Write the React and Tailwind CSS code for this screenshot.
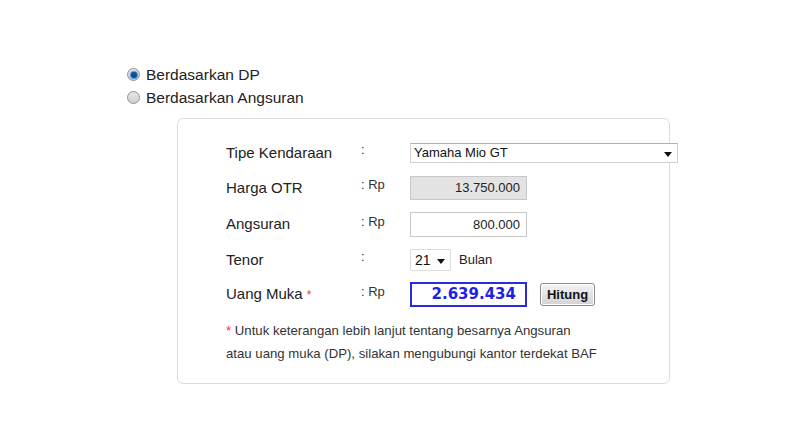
import React from "react"

function Radio({ checked, label }) {
  return (
    <label className="flex h-[23px] items-center">
      <span className="flex h-[13px] w-[13px] shrink-0 items-center justify-center rounded-full border border-[#8f8f8f] bg-gradient-to-b from-[#e8e8e8] to-[#cfcfcf]">
        {checked && <span className="h-[6px] w-[6px] rounded-full bg-[#0b4f9e] shadow-[0_0_1px_1px_#4a90d9]" />}
      </span>
      <span className="ml-[6px] text-[15.5px] text-[#222]">{label}</span>
    </label>
  )
}

function Row({ label, sep, children, className = "", star }) {
  return (
    <div className={"flex items-center " + className}>
      <div className="w-[135px] shrink-0 text-[15px] text-[#222]">
        {label}
        {star && <span className="ml-[4px] text-[12px] text-[#e33]">*</span>}
      </div>
      <div className="w-[49px] shrink-0 -translate-y-[3px] text-[13px] text-[#333]">{sep}</div>
      <div className="flex shrink-0 items-center">{children}</div>
    </div>
  )
}

export default function App() {
  return (
    <div className="h-[445px] w-[800px] overflow-hidden bg-white pt-[63px] font-['Liberation_Sans',Arial,sans-serif]">
      <div className="ml-[127px]">
        <Radio checked label="Berdasarkan DP" />
        <Radio label="Berdasarkan Angsuran" />
      </div>

      <div className="ml-[177px] mt-[9px] h-[266px] w-[493px] rounded-[6px] border border-[#dcdcdc] pl-[48px] pt-[24px]">
        <Row label="Tipe Kendaraan" sep=":" className="h-[20px]">
          <div className="flex h-[20px] w-[268px] items-center justify-between border border-[#d0d0d0] border-t-[#b0b0b0] bg-white pl-[3px] pr-[5px] text-[13px] text-[#111]">
            <span>Yamaha Mio GT</span>
            <span className="mt-[2px] h-0 w-0 border-x-[4px] border-t-[5px] border-x-transparent border-t-[#111]" />
          </div>
        </Row>

        <Row label="Harga OTR" sep=": Rp" className="mt-[13px] h-[24px]">
          <div className="flex h-[24px] w-[117px] items-center justify-end border border-[#c8c8c8] bg-[#e3e3e3] pr-[6px] text-[13px] text-[#222]">
            13.750.000
          </div>
        </Row>

        <Row label="Angsuran" sep=": Rp" className="mt-[12px] h-[25px]">
          <div className="flex h-[25px] w-[117px] items-center justify-end border border-[#c8c8c8] bg-white pr-[6px] text-[13px] text-[#222]">
            800.000
          </div>
        </Row>

        <Row label="Tenor" sep=":" className="mt-[12px] h-[22px]">
          <div className="flex h-[22px] w-[41px] items-center justify-between rounded-[2px] border border-[#dcdcdc] pl-[4px] pr-[5px] text-[14px] text-[#111]">
            <span>21</span>
            <span className="mt-[2px] h-0 w-0 border-x-[4px] border-t-[5px] border-x-transparent border-t-[#111]" />
          </div>
          <span className="ml-[8px] text-[13px] text-[#222]">Bulan</span>
        </Row>

        <Row label="Uang Muka" star sep=": Rp" className="mt-[11px] h-[25px]">
          <div className="flex h-[25px] w-[117px] items-center justify-end border-[2px] border-[#2a2ae0] bg-white pr-[9px] font-['DejaVu_Sans',Verdana,sans-serif] text-[15px] font-bold text-[#1f1fe6]">
            2.639.434
          </div>
          <button className="ml-[13px] h-[23px] w-[55px] rounded-[3px] border border-[#8a8a8a] bg-gradient-to-b from-[#f4f4f4] to-[#d2d2d2] text-[13px] font-bold text-[#111] shadow-[inset_0_0_0_1px_#fff]">
            Hitung
          </button>
        </Row>

        <div className="mt-[12px] text-[13.2px] leading-[23px] text-[#333]">
          <div>
            <span className="text-[#e33]">*</span> Untuk keterangan lebih lanjut tentang besarnya Angsuran
          </div>
          <div>atau uang muka (DP), silakan mengubungi kantor terdekat BAF</div>
        </div>
      </div>
    </div>
  )
}
